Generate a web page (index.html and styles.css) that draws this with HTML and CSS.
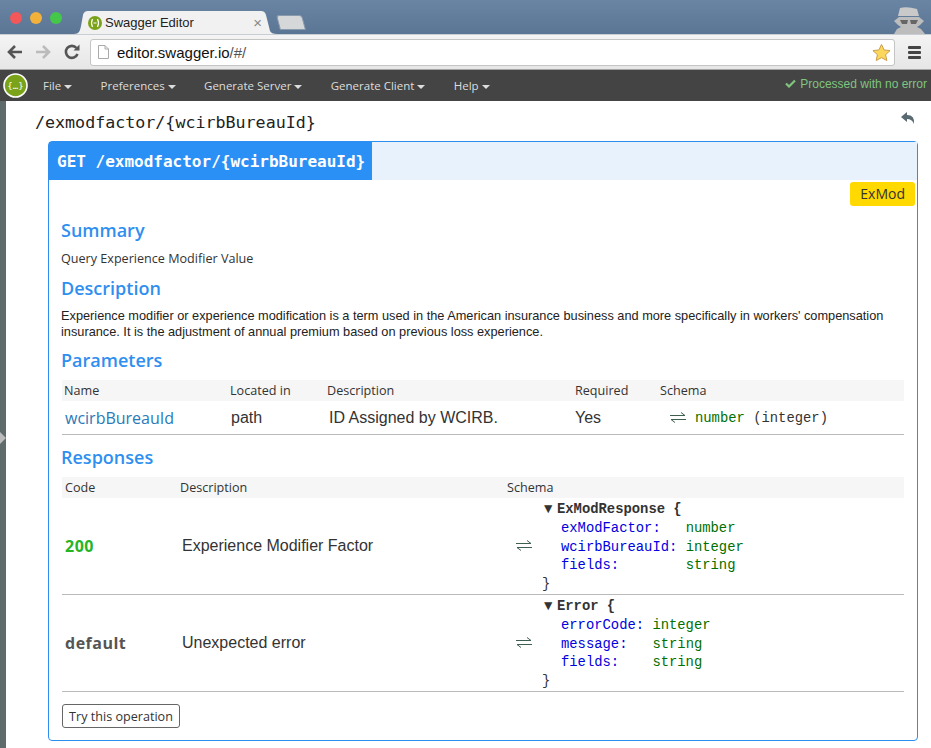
FILE: index.html
```html
<!DOCTYPE html>
<html>

<head>
  <title>Swagger Editor</title>
  <link rel="stylesheet" href="styles.css">
</head>

<body>
  <div class="tabstrip">
    <div class="lights">
      <span class="light red"></span>
      <span class="light yellow"></span>
      <span class="light green"></span>
    </div>
    <div class="tab">
      <svg class="favicon" width="14" height="14" viewBox="0 0 14 14">
        <circle cx="7" cy="7" r="7" fill="#7ba31a" />
        <path d="M4.5 3 Q2.5 7 4.5 11 M9.5 3 Q11.5 7 9.5 11 M5.5 7 H8.5" fill="none" stroke="#fff" stroke-width="1.2" />
      </svg>
      <span class="tab-title">Swagger Editor</span>
      <span class="tab-close">×</span>
    </div>
    <div class="new-tab"></div>
    <svg class="spy" width="33" height="27" viewBox="0 0 33 27">
      <path d="M7 1 Q14 -1 24 2 L26 9 H5 Z" fill="#c9c9c9" />
      <path d="M1 14 L6 10 H26 L31 14 L27 18 L24 20 L28 22 L32 27 H1 L4 22 L8 20 L5 18 Z" fill="#bdbdbd" />
      <path d="M7 13 H15 L14 17 H9 Z M17 13 H25 L23 17 H18 Z" fill="#666" />
    </svg>
  </div>

  <div class="toolbar">
    <svg class="nav-icon" width="18" height="16" viewBox="0 0 18 16">
      <path d="M16 8 H4 M9 2 L3 8 L9 14" fill="none" stroke="#555" stroke-width="2.6" />
    </svg>
    <svg class="nav-icon" width="18" height="16" viewBox="0 0 18 16">
      <path d="M2 8 H14 M9 2 L15 8 L9 14" fill="none" stroke="#bbb" stroke-width="2.6" />
    </svg>
    <svg class="nav-icon reload" width="16" height="16" viewBox="0 0 16 16">
      <path d="M13.5 10 A6 6 0 1 1 12.5 4" fill="none" stroke="#555" stroke-width="2.6" />
      <path d="M9.5 6.5 H15.5 V0.5 Z" fill="#555" />
    </svg>
    <div class="omnibox">
      <svg width="11" height="14" viewBox="0 0 11 14">
        <path d="M.5 .5 H7 L10.5 4 V13.5 H.5 Z M7 .5 V4 H10.5" fill="#fff" stroke="#aaa" />
      </svg>
      <span class="url">editor.swagger.io<span class="url-path">/#/</span></span>
      <svg class="star" width="19" height="19" viewBox="0 0 20 19">
        <path d="M10 1 L12.7 6.8 L19 7.5 L14.3 11.8 L15.6 18 L10 14.9 L4.4 18 L5.7 11.8 L1 7.5 L7.3 6.8 Z" fill="#fbd75b" stroke="#c99a45" />
      </svg>
    </div>
    <div class="menu-icon">
      <span></span><span></span><span></span>
    </div>
  </div>

  <div class="menubar">
    <svg class="logo" width="25" height="25" viewBox="0 0 25 25">
      <circle cx="12.5" cy="12.5" r="11.5" fill="#7ba31a" stroke="#fff" stroke-width="1.6" />
      <text x="12.5" y="15.5" text-anchor="middle" class="logo-text">{…}</text>
    </svg>
    <a class="menu-item">File <i class="caret"></i></a>
    <a class="menu-item">Preferences <i class="caret"></i></a>
    <a class="menu-item">Generate Server <i class="caret"></i></a>
    <a class="menu-item">Generate Client <i class="caret"></i></a>
    <a class="menu-item">Help <i class="caret"></i></a>
    <span class="status">
      <svg class="check" width="11" height="9" viewBox="0 0 11 9">
        <path d="M1 4.5 L4 7.5 L10 1.5" fill="none" stroke="#7fc47f" stroke-width="2.2" />
      </svg>
      Processed with no error
    </span>
  </div>

  <div class="main">
    <div class="sidebar"><i class="sidebar-arrow"></i></div>
    <div class="content">
      <div class="path-row">
        <span class="path">/exmodfactor/{wcirbBureauId}</span>
        <svg class="back" width="14" height="12" viewBox="0 0 14 12">
          <path d="M6 0 L0 5 L6 10 V7 Q11 7 13 12 Q14 3 6 3 Z" fill="#5a6a72" />
        </svg>
      </div>

      <div class="operation">
        <div class="op-head">
          <span class="op-title">GET /exmodfactor/{wcirbBureauId}</span>
        </div>
        <div class="tags"><span class="tag">ExMod</span></div>
        <div class="op-body">
          <h3 class="first">Summary</h3>
          <p class="summary">Query Experience Modifier Value</p>
          <h3>Description</h3>
          <p class="desc">Experience modifier or experience modification is a term used in the American insurance business and more specifically in workers' compensation insurance. It is the adjustment of annual premium based on previous loss experience.</p>

          <h3>Parameters</h3>
          <div class="thead params-grid">
            <span>Name</span>
            <span>Located in</span>
            <span>Description</span>
            <span>Required</span>
            <span>Schema</span>
          </div>
          <div class="trow params-grid param-row">
            <span class="param-name">wcirbBureauId</span>
            <span class="cell-path">path</span>
            <span class="cell-desc">ID Assigned by WCIRB.</span>
            <span>Yes</span>
            <span class="schema-inline">
              <svg class="swap" width="16" height="11" viewBox="0 0 16 11">
                <path d="M0 3.5 H15 L11 .5 M16 7.5 H1 L5 10.5" fill="none" stroke="#3f5f50" />
              </svg>
              <code><span class="type">number</span> (integer)</code>
            </span>
          </div>

          <h3 class="responses">Responses</h3>
          <div class="thead resp-grid">
            <span>Code</span>
            <span>Description</span>
            <span>Schema</span>
          </div>
          <div class="trow resp-grid resp-row">
            <span class="code ok">200</span>
            <span class="cell-resp">Experience Modifier Factor</span>
            <div class="schema-cell">
              <svg class="swap" width="16" height="11" viewBox="0 0 16 11">
                <path d="M0 3.5 H15 L11 .5 M16 7.5 H1 L5 10.5" fill="none" stroke="#3f5f50" />
              </svg>
              <div class="model">
                <div><span class="arrow">▼</span><b>ExModResponse {</b></div>
                <div class="prop"><span class="key">exModFactor:</span>   <span class="type">number</span></div>
                <div class="prop"><span class="key">wcirbBureauId:</span> <span class="type">integer</span></div>
                <div class="prop"><span class="key">fields:</span>        <span class="type">string</span></div>
                <div>}</div>
              </div>
            </div>
          </div>
          <div class="trow resp-grid resp-row">
            <span class="code">default</span>
            <span class="cell-resp">Unexpected error</span>
            <div class="schema-cell">
              <svg class="swap" width="16" height="11" viewBox="0 0 16 11">
                <path d="M0 3.5 H15 L11 .5 M16 7.5 H1 L5 10.5" fill="none" stroke="#3f5f50" />
              </svg>
              <div class="model">
                <div><span class="arrow">▼</span><b>Error {</b></div>
                <div class="prop"><span class="key">errorCode:</span> <span class="type">integer</span></div>
                <div class="prop"><span class="key">message:</span>   <span class="type">string</span></div>
                <div class="prop"><span class="key">fields:</span>    <span class="type">string</span></div>
                <div>}</div>
              </div>
            </div>
          </div>
          <button class="try" type="button">Try this operation</button>
        </div>
      </div>
    </div>
  </div>
</body>

</html>
```

FILE: styles.css
```css
html,
body {
  margin: 0;
  height: 748px;
  overflow: hidden;
}

body {
  font-family: "Liberation Sans", sans-serif;
  background: #fff;
  color: #333;
}

/* browser chrome */
.tabstrip {
  height: 34px;
  box-sizing: border-box;
  display: flex;
  align-items: flex-end;
  background: linear-gradient(#6a85a3, #5b7694);
}

.lights {
  display: flex;
  gap: 8px;
  margin: 0 0 10px 10px;
  width: 64px;
}

.light {
  width: 12px;
  height: 12px;
  border-radius: 50%;
}

.red {
  background: #f2575a;
}

.yellow {
  background: #f2b13a;
}

.green {
  background: #45c84a;
}

.tab {
  width: 203px;
  height: 23px;
  box-sizing: border-box;
  display: flex;
  align-items: center;
  padding: 0 15px 0 14px;
  background: #f1f1f1;
  clip-path: path("M0 23 C5 23 6 20 7 15 L9 4 C10 1 11 0 15 0 H186 C190 0 191 1 192 4 L196 20 C197 22 199 23 203 23 Z");
}

.favicon {
  margin-right: 3px;
  flex: none;
}

.tab-title {
  flex: 1;
  font-size: 13px;
  color: #222;
}

.tab-close {
  color: #888;
  font-size: 15px;
}

.new-tab {
  width: 26px;
  height: 15px;
  margin: 0 0 4px 1px;
  background: #d5d7d9;
  border: 1px solid #8a9aad;
  border-radius: 3px 3px 1px 1px;
  box-sizing: border-box;
  transform: skewX(15deg);
}

.spy {
  margin-left: auto;
  margin-right: 5px;
}

.toolbar {
  height: 36px;
  box-sizing: border-box;
  display: flex;
  align-items: center;
  padding-left: 6px;
  gap: 10px;
  background: linear-gradient(#f4f4f4, #e6e6e6);
  border-top: 1px solid #c9ced4;
  border-bottom: 1px solid #a5a5a5;
}

.nav-icon {
  flex: none;
}

.reload {
  margin-left: 2px;
}

.omnibox {
  width: 805px;
  height: 27px;
  box-sizing: border-box;
  display: flex;
  align-items: center;
  padding: 0 3px 0 7px;
  background: #fff;
  border: 1px solid #c4c4c4;
  border-radius: 3px;
}

.url {
  margin-left: 8px;
  font-size: 15px;
  color: #111;
  flex: 1;
}

.url-path {
  color: #555;
}

.star {
  margin-left: auto;
}

.menu-icon {
  margin-left: 3px;
  width: 13px;
  display: flex;
  flex-direction: column;
  gap: 2px;
}

.menu-icon span {
  height: 3px;
  background: #444;
  border-radius: 1px;
}

/* app menu */
.menubar {
  height: 31px;
  display: flex;
  align-items: center;
  background: #444;
}

.logo {
  margin-left: 3px;
  flex: none;
}

.logo-text {
  font: 9px "DejaVu Sans Mono", monospace;
  fill: #fff;
}

.menu-item {
  font-family: "Open Sans", sans-serif;
  font-size: 11.5px;
  color: #ddd;
  margin-left: 15px;
  margin-right: 13.4px;
  white-space: nowrap;
}

.caret {
  display: inline-block;
  vertical-align: middle;
  border-top: 4px solid #ddd;
  border-left: 4px solid transparent;
  border-right: 4px solid transparent;
}

.status {
  margin-left: auto;
  margin-right: 4px;
  margin-top: -4px;
  font-size: 12px;
  color: #7fc47f;
}

.check {
  margin-right: 1px;
}

/* page */
.main {
  display: flex;
  height: 647px;
}

.sidebar {
  width: 6px;
  flex: none;
  background: #5f6b6b;
  display: flex;
  align-items: center;
}

.sidebar-arrow {
  margin-top: 26px;
  border-left: 6px solid #bbb;
  border-top: 6px solid transparent;
  border-bottom: 6px solid transparent;
}

.content {
  flex: 1;
  padding: 0 13px 0 29px;
}

.path-row {
  height: 40px;
  display: flex;
  justify-content: space-between;
  align-items: flex-start;
  padding-top: 12px;
  box-sizing: border-box;
}

.path {
  font-family: "DejaVu Sans Mono", monospace;
  font-size: 16.67px;
  color: #222;
}

.back {
  margin: -1px 3px 0 0;
}

.operation {
  margin-left: 13px;
  border: 1px solid #2d8ef0;
  border-radius: 4px;
  height: 600px;
  box-sizing: border-box;
}

.op-head {
  height: 38px;
  background: #e8f2fd;
}

.op-title {
  display: inline-block;
  height: 38px;
  line-height: 39px;
  padding: 0 7px 0 8px;
  background: #2a90f5;
  color: #fff;
  font-family: "DejaVu Sans Mono", monospace;
  font-weight: bold;
  font-size: 16px;
}

.tags {
  display: flex;
  justify-content: flex-end;
  padding: 2px 2px 0 0;
  height: 24px;
}

.tag {
  background: #ffd900;
  color: #333;
  font-family: "Open Sans", sans-serif;
  font-size: 14px;
  line-height: 24px;
  padding: 0 10px;
  border-radius: 3px;
}

.op-body {
  padding: 0 13px;
}

h3 {
  margin: 0 0 0 -1px;
  font-family: "Open Sans", sans-serif;
  font-weight: 600;
  font-size: 18px;
  line-height: 24px;
  color: #2f8ff0;
}

.first {
  margin-top: 12px;
}

.summary {
  margin: 7px 0 7px -1px;
  font-family: "Open Sans", sans-serif;
  font-size: 12.6px;
  line-height: 20px;
  color: #333;
}

.desc {
  margin: 8px 0 8px -1px;
  font-size: 12.75px;
  line-height: 16px;
  color: #222;
}

.thead {
  height: 21px;
  align-items: center;
  background: #f6f6f6;
  font-family: "Open Sans", sans-serif;
  font-size: 12.6px;
  color: #333;
}

.params-grid {
  display: grid;
  grid-template-columns: 166px 97px 248px 85px 1fr;
  padding-left: 2px;
  margin-top: 8px;
}

.resp-grid {
  display: grid;
  grid-template-columns: 115px 327px 1fr;
  padding-left: 3px;
  margin-top: 8px;
}

.trow {
  align-items: center;
  margin-top: 0;
  border-bottom: 1px solid #bbb;
  font-size: 16px;
  color: #333;
}

.param-row {
  height: 33px;
}

.param-name {
  font-family: "Open Sans", sans-serif;
  font-size: 16px;
  color: #2a7ab8;
  padding-left: 1px;
}

.cell-path {
  padding-left: 1px;
}

.cell-desc {
  padding-left: 2px;
}

.cell-resp {
  padding-left: 2px;
}

.schema-inline {
  display: flex;
  align-items: center;
  gap: 9px;
  padding-left: 10px;
}

.swap {
  flex: none;
}

code,
.model {
  font-family: "Liberation Mono", monospace;
  font-size: 13.85px;
}

.type {
  color: #007000;
}

.responses {
  margin-top: 10px;
}

.code {
  font-family: "Open Sans", sans-serif;
  font-weight: bold;
  font-size: 16px;
  color: #555;
  letter-spacing: .5px;
}

.ok {
  color: #25b525;
}

.resp-row {
  height: 97px;
  box-sizing: border-box;
  margin-top: 0;
}

.schema-cell {
  display: flex;
  align-items: center;
  padding-left: 9px;
}

.model {
  margin: 2px 0 0 10px;
  line-height: 18.7px;
  color: #333;
}

.prop {
  padding-left: 19px;
  white-space: pre;
}

.arrow {
  display: inline-block;
  width: 15px;
  padding-left: 2px;
  box-sizing: border-box;
  font-size: 14px;
  line-height: 14px;
}

.key {
  color: #0000e0;
}

.try {
  display: block;
  margin-top: 12px;
  height: 24px;
  width: 118px;
  padding: 0;
  background: #fff;
  border: 1px solid #666;
  border-radius: 3px;
  font-family: "Open Sans", sans-serif;
  font-size: 12.6px;
  color: #333;
}
```
